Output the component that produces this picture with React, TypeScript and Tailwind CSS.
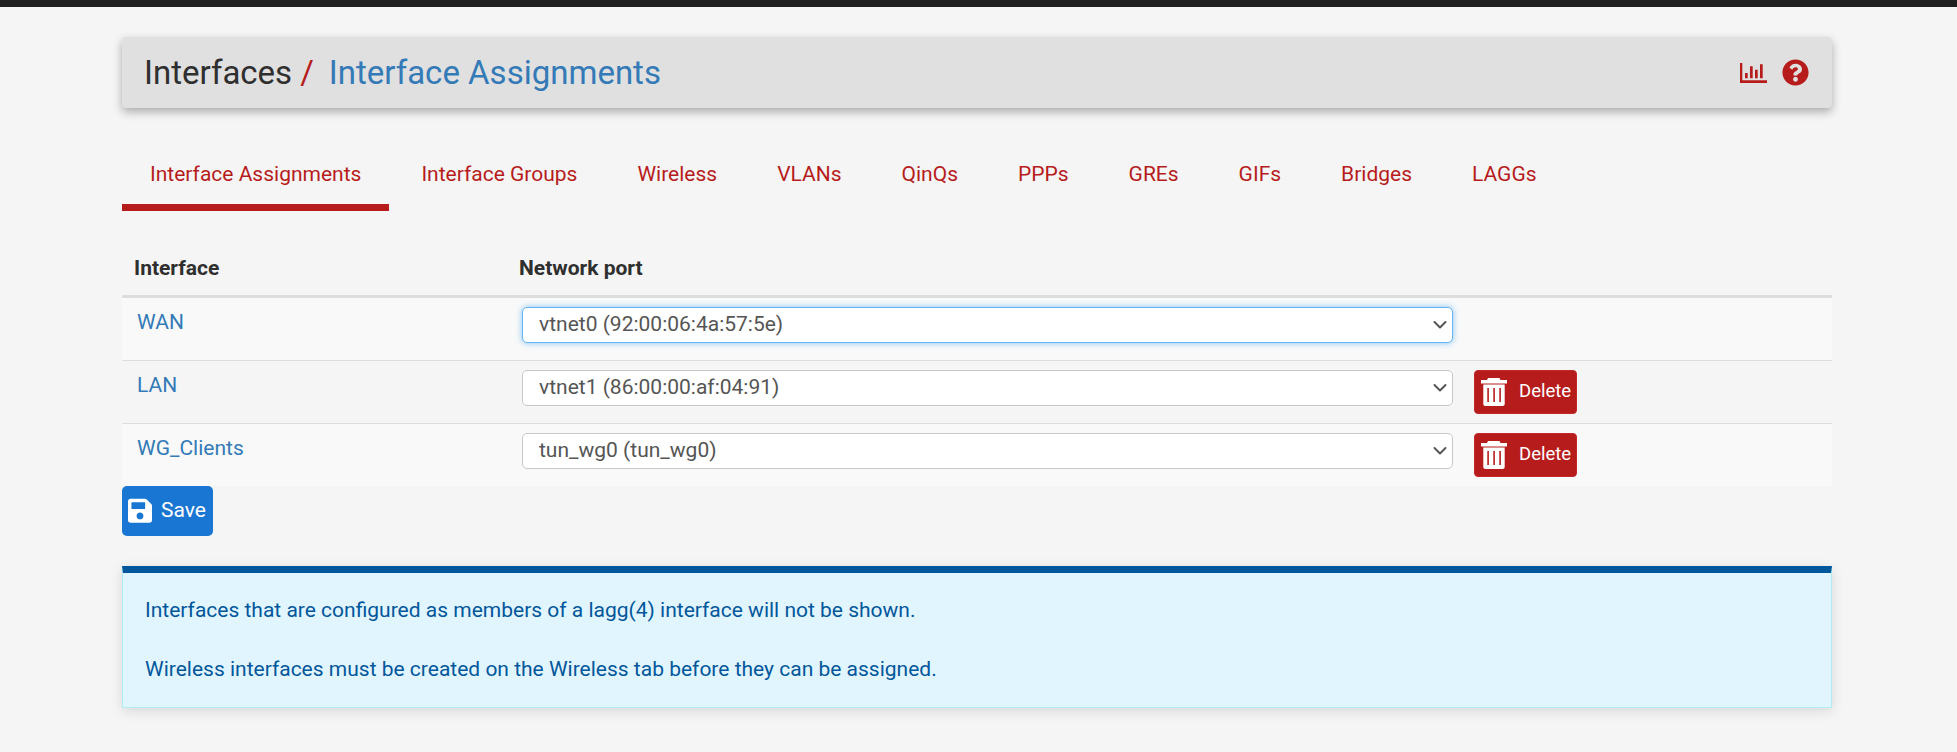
import React from "react";
import { FaQuestionCircle, FaSave } from "react-icons/fa";

const tabs = ["Interface Assignments", "Interface Groups", "Wireless", "VLANs", "QinQs", "PPPs", "GREs", "GIFs", "Bridges", "LAGGs"];

function Chevron() {
  return (
    <svg viewBox="0 0 16 16" className="absolute right-[5px] top-[10px] w-[16px] h-[16px] pointer-events-none" fill="none" stroke="#555555" strokeWidth="2" strokeLinecap="round" strokeLinejoin="round">
      <path d="M2.500 5l5.500 5.500 5.500-5.500" />
    </svg>
  );
}

function PortSelect({ value, focused }: { value: string; focused?: boolean }) {
  return (
    <div className="relative w-[931px] h-[36px] shrink-0">
      <select
        defaultValue={value}
        className={
          "appearance-none w-full h-full bg-white rounded-[5px] border pl-[16px] pr-[30px] text-[21px] text-[#555555] outline-none " +
          (focused ? "border-[#64b5f6] shadow-[0_0_6px_rgba(100,181,246,0.8)]" : "border-[#c8c8c8]")
        }
      >
        <option>{value}</option>
      </select>
      <Chevron />
    </div>
  );
}

function TrashIcon() {
  return (
    <svg viewBox="0 0 26 28" className="w-[26px] h-[28px] shrink-0" fill="#ffffff">
      <path d="M7 0h11.500l1 2H26v3.500H0V2h6z" />
      <path
        fillRule="evenodd"
        d="M2.300 6.500h21.400v19.500a2 2 0 0 1-2 2H4.300a2 2 0 0 1-2-2zM6.300 10v14h1.600V10zM12.300 10v14h1.600V10zM18.300 10v14h1.600V10z"
      />
    </svg>
  );
}

function DeleteButton() {
  return (
    <button className="ml-[21px] flex items-center w-[103px] h-[44px] rounded-[4px] bg-[#b71c1c] border border-[#c62828] text-white text-[18.500px] pl-[6px]">
      <TrashIcon />
      <span className="ml-[12px]">Delete</span>
    </button>
  );
}

function Row({ name, value, striped, focused, del, last }: { name: string; value: string; striped?: boolean; focused?: boolean; del?: boolean; last?: boolean }) {
  return (
    <div className={"flex " + (last ? "h-[62px] " : "h-[63px] border-b border-[#dddddd] ") + (striped ? "bg-[#f9f9f9]" : "bg-[#f5f5f5]")}>
      <a className="w-[400px] pl-[15px] pt-[10px] text-[21px] leading-[28px] text-[#337ab7] shrink-0">{name}</a>
      <div className="flex items-start pt-[9px]">
        <PortSelect value={value} focused={focused} />
        {del && <DeleteButton />}
      </div>
    </div>
  );
}

export default function App() {
  return (
    <div className="min-h-[752px] bg-[#f5f5f5] font-['Roboto',sans-serif] text-[21px] text-[#212121]">
      <div className="h-[7px] bg-[#212121]" />
      <div className="w-[1710px] ml-[122px] pt-[30px]">
        <div className="h-[71px] flex items-center justify-between rounded-[4px] bg-[#e0e0e0] pl-[22px] pr-[23px] shadow-[0_4px_10px_rgba(0,0,0,0.3)]">
          <h1 className="text-[33px] font-normal flex items-center">
            <span className="text-[#2f2f2f]">Interfaces</span>
            <span className="text-[#b71c1c] ml-[8px]">/</span>
            <span className="text-[#337ab7] ml-[15px]">Interface Assignments</span>
          </h1>
          <div className="flex items-center gap-[15px] text-[#b71c1c]">
            <svg viewBox="0 0 27 20" className="w-[27px] h-[20px]" fill="#b71c1c">
              <path d="M0 0h2.300v17.300H27V20H0z" />
              <path d="M5 10h2.700v5.300H5zM10 3.300h2.700v12H10zM15 6.700h2.700v8.600H15zM20 1.300h2.700v14H20z" />
            </svg>
            <FaQuestionCircle className="w-[27px] h-[27px]" />
          </div>
        </div>

        <nav className="flex gap-[4px] mt-[25px] h-[78px]">
          {tabs.map((t, i) => (
            <a
              key={t}
              className={
                "h-[78px] flex items-center justify-center px-[28px] text-[#b71c1c] text-[21px] " +
                (i === 0 ? "border-b-[7px] border-[#b71c1c] pt-[12px]" : "pt-[5px]")
              }
            >
              {t}
            </a>
          ))}
        </nav>

        <div className="flex h-[87px] items-end border-b-[3px] border-[#dddddd] font-bold text-[21px] text-[#2f2f2f] pb-[11px]">
          <div className="w-[397px] pl-[12px]">Interface</div>
          <div>Network port</div>
        </div>
        <Row name="WAN" value="vtnet0 (92:00:06:4a:57:5e)" striped focused />
        <Row name="LAN" value="vtnet1 (86:00:00:af:04:91)" del />
        <Row name="WG_Clients" value="tun_wg0 (tun_wg0)" striped del last />

        <button className="flex items-center w-[91px] h-[50px] rounded-[5px] bg-[#1976d2] text-white text-[21px] pl-[6px]">
          <FaSave className="w-[24px] h-[27.500px]" />
          <span className="ml-[9px]">Save</span>
        </button>

        <div className="mt-[30px] h-[142px] bg-[#e1f5fe] border border-[#b2ebf2] border-t-[7px] border-t-[#01579b] text-[#01579b] text-[21px] pl-[22px] pt-[23px] shadow-[0_3px_12px_rgba(0,0,0,0.12)]">
          <p className="leading-[29px]">Interfaces that are configured as members of a lagg(4) interface will not be shown.</p>
          <p className="leading-[29px] mt-[30px]">Wireless interfaces must be created on the Wireless tab before they can be assigned.</p>
        </div>
      </div>
    </div>
  );
}
